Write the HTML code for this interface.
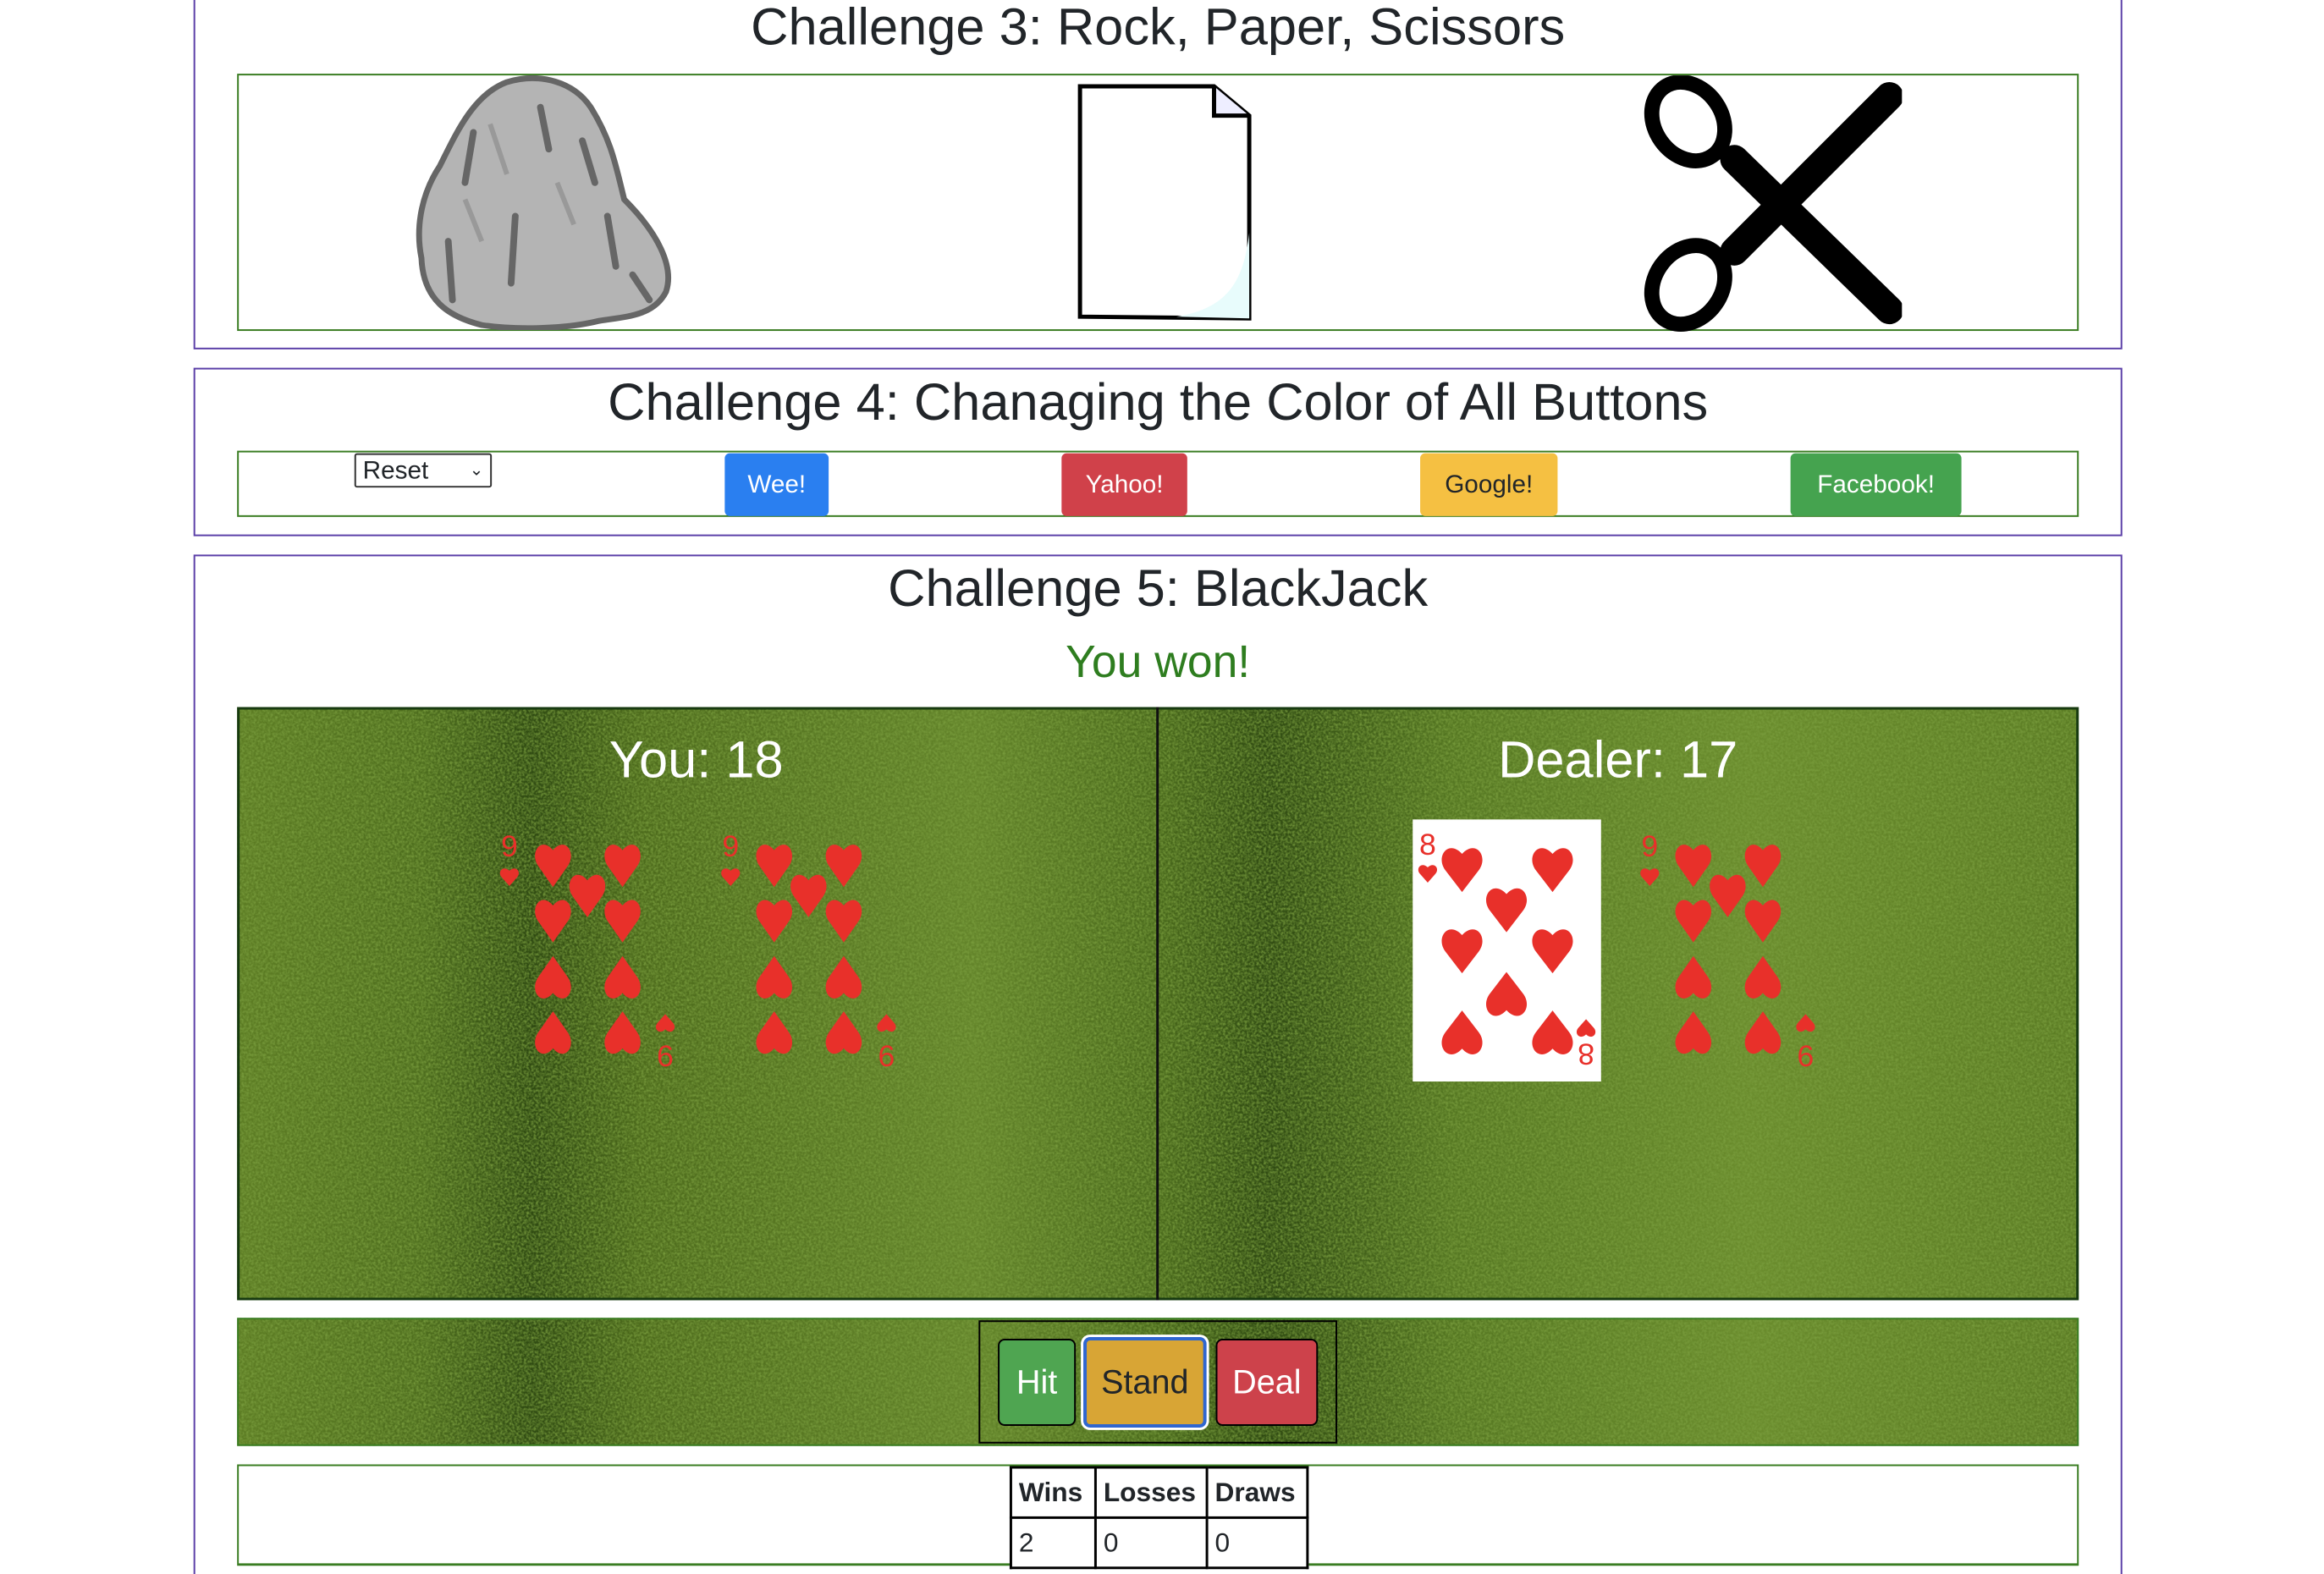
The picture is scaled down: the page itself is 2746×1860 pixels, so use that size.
<!DOCTYPE html>
<html style="height:1860px;overflow:hidden"><head><meta charset="utf-8"><style>
*{margin:0;padding:0;box-sizing:border-box}
body{width:2746px;height:1860px;background:#fff;position:relative;overflow:hidden;font-family:"Liberation Sans",sans-serif;color:#212529}
#w{position:absolute;left:0;top:0;width:2774px;height:1880px;transform:scale(0.99);transform-origin:0 0}
.a{position:absolute}
.box{position:absolute;border:2px solid #5b3fa8}
.in{position:absolute;border:2px solid #3a7d22}
.t{position:absolute;left:0;width:2764px;text-align:center;font-size:62px;line-height:1}
.btn{position:absolute;border-radius:6px;font-size:30px;display:flex;align-items:center;justify-content:center;color:#fff}
.bb{position:absolute;border:2px solid #000;border-radius:8px;font-size:40px;display:flex;align-items:center;justify-content:center;color:#fff}
td,th{border:3px solid #000;font-size:32px;text-align:left;padding:0 8px;height:60px}
</style></head><body><div id="w">
<svg width="0" height="0" style="position:absolute"><defs>
<path id="h" d="M50 98 L12 55 C-12 28 18 -8 50 22 C82 -8 112 28 88 55 Z"/>
<filter id="g" x="0" y="0" width="100%" height="100%"><feTurbulence type="fractalNoise" baseFrequency="0.35" numOctaves="2" seed="3"/><feColorMatrix values="0 0 0 0 0.2  0 0 0 0 0.35  0 0 0 0 0.05  0 0 0 -1.6 1.1"/></filter>
<linearGradient id="gg" x1="0" x2="1" y1="0" y2="0">
<stop offset="0" stop-color="#5d7d24"/><stop offset="0.1" stop-color="#4e6e1e"/><stop offset="0.16" stop-color="#2f4a12"/><stop offset="0.22" stop-color="#4d6b1c"/><stop offset="0.4" stop-color="#63842a"/><stop offset="0.5" stop-color="#4a6a1c"/><stop offset="0.56" stop-color="#2f4a12"/><stop offset="0.66" stop-color="#557722"/><stop offset="0.82" stop-color="#6a8c2d"/><stop offset="1" stop-color="#5b7c24"/></linearGradient>
</defs></svg>

<div class="box" style="left:231px;top:-10px;width:2302px;height:427px"></div>
<div class="t" style="top:2px">Challenge 3: Rock, Paper, Scissors</div>
<div class="in" style="left:283px;top:88px;width:2198px;height:307px"></div>
<svg class="a" style="left:495px;top:88px" width="310" height="306" viewBox="0 0 310 306">
<path d="M110 10 C150 -2 190 10 210 40 C235 80 240 110 250 150 C290 190 310 230 300 260 C285 290 250 290 220 295 C180 305 120 306 80 300 C40 290 10 270 8 220 C0 180 10 140 30 110 C50 70 70 25 110 10 Z" fill="#b4b4b4" stroke="#666" stroke-width="7"/>
<path d="M70 70 L60 130 M150 40 L160 90 M200 80 L215 130 M120 170 L115 250 M230 170 L240 230 M40 200 L45 270 M260 240 L280 270" stroke="#666" stroke-width="8" stroke-linecap="round"/>
<path d="M90 60 L110 120 M170 130 L190 180 M60 150 L80 200" stroke="#999" stroke-width="6"/>
</svg>
<svg class="a" style="left:1284px;top:98px" width="212" height="286" viewBox="0 0 212 286">
<path d="M5 5 L165 5 L207 40 L207 282 L5 280 Z" fill="#fff" stroke="#000" stroke-width="5"/>
<path d="M165 5 L165 40 L207 40" fill="#eef" stroke="#000" stroke-width="5"/>
<path d="M207 180 C200 240 180 270 120 280 L207 282 Z" fill="#e8fcfc"/>
</svg>
<svg class="a" style="left:1960px;top:90px" width="310" height="306" viewBox="0 0 310 306">
<path d="M110 100 L295 280" stroke="#000" stroke-width="34" stroke-linecap="round"/>
<path d="M110 210 L295 25" stroke="#000" stroke-width="34" stroke-linecap="round"/>
<ellipse cx="55" cy="55" rx="40" ry="50" transform="rotate(-35 55 55)" fill="none" stroke="#000" stroke-width="18"/>
<ellipse cx="55" cy="250" rx="40" ry="50" transform="rotate(35 55 250)" fill="none" stroke="#000" stroke-width="18"/>
</svg>

<div class="box" style="left:231px;top:439px;width:2302px;height:201px"></div>
<div class="t" style="top:450px">Challenge 4: Chanaging the Color of All Buttons</div>
<div class="in" style="left:283px;top:538px;width:2198px;height:79px"></div>
<div class="a" style="left:423px;top:541px;width:164px;height:41px;border:2px solid #333;border-radius:3px;font-size:30px;padding-left:8px;line-height:37px">Reset<span style="position:absolute;right:8px;top:0;font-size:20px">&#8964;</span></div>
<div class="btn" style="left:865px;top:541px;width:124px;height:75px;background:#2a7ff0">Wee!</div>
<div class="btn" style="left:1267px;top:541px;width:150px;height:75px;background:#d0414a">Yahoo!</div>
<div class="btn" style="left:1695px;top:541px;width:164px;height:75px;background:#f5c042;color:#212529">Google!</div>
<div class="btn" style="left:2137px;top:541px;width:204px;height:75px;background:#45a34f">Facebook!</div>

<div class="box" style="left:231px;top:662px;width:2302px;height:1240px"></div>
<div class="t" style="top:672px">Challenge 5: BlackJack</div>
<div class="t" style="top:763px;color:#2e7d1f;font-size:54px">You won!</div>
<svg class="a" style="left:283px;top:844px" width="2198" height="708"><rect width="2198" height="708" fill="url(#gg)"/><rect width="2198" height="708" filter="url(#g)"/></svg>
<div class="a" style="left:283px;top:844px;width:2198px;height:708px;border:3px solid #173a10"></div>
<div class="a" style="left:1380px;top:844px;width:3px;height:708px;background:#111"></div>
<div class="a" style="left:531px;top:872px;width:600px;text-align:center;color:#fff;font-size:62px">You: 18</div>
<div class="a" style="left:1631px;top:872px;width:600px;text-align:center;color:#fff;font-size:62px">Dealer: 17</div>

<svg class="a" style="left:585px;top:978px" width="225" height="313" viewBox="0 0 225 313">
<g id="nine" fill="#e8302a">
<text x="23" y="44" font-size="36" text-anchor="middle" font-family="Liberation Sans">9</text>
<use href="#h" transform="translate(11 56) scale(0.24)"/>
<use href="#h" transform="translate(52 24) scale(0.46 0.58)"/>
<use href="#h" transform="translate(135 24) scale(0.46 0.58)"/>
<use href="#h" transform="translate(93 60) scale(0.46 0.58)"/>
<use href="#h" transform="translate(52 90) scale(0.46 0.58)"/>
<use href="#h" transform="translate(135 90) scale(0.46 0.58)"/>
<use href="#h" transform="translate(52 220) scale(0.46 -0.58)"/>
<use href="#h" transform="translate(135 220) scale(0.46 -0.58)"/>
<use href="#h" transform="translate(52 286) scale(0.46 -0.58)"/>
<use href="#h" transform="translate(135 286) scale(0.46 -0.58)"/>
<use href="#h" transform="translate(197 256) scale(0.24 -0.24)"/>
<text x="209" y="296" font-size="36" text-anchor="middle" font-family="Liberation Sans" transform="rotate(180 209 283)">9</text>
</g></svg>
<svg class="a" style="left:849px;top:978px" width="225" height="313" viewBox="0 0 225 313"><use href="#nine"/></svg>
<svg class="a" style="left:1946px;top:978px" width="225" height="313" viewBox="0 0 225 313"><use href="#nine"/></svg>
<svg class="a" style="left:1686px;top:978px" width="225" height="313" viewBox="0 0 225 313">
<rect width="225" height="313" fill="#fff"/>
<g fill="#e8302a">
<text x="18" y="42" font-size="36" text-anchor="middle" font-family="Liberation Sans">8</text>
<use href="#h" transform="translate(6 52) scale(0.24)"/>
<use href="#h" transform="translate(33 28) scale(0.52 0.6)"/>
<use href="#h" transform="translate(141 28) scale(0.52 0.6)"/>
<use href="#h" transform="translate(86 76) scale(0.52 0.6)"/>
<use href="#h" transform="translate(33 125) scale(0.52 0.6)"/>
<use href="#h" transform="translate(141 125) scale(0.52 0.6)"/>
<use href="#h" transform="translate(86 241) scale(0.52 -0.6)"/>
<use href="#h" transform="translate(33 287) scale(0.52 -0.6)"/>
<use href="#h" transform="translate(141 287) scale(0.52 -0.6)"/>
<use href="#h" transform="translate(195 262) scale(0.24 -0.24)"/>
<text x="207" y="294" font-size="36" text-anchor="middle" font-family="Liberation Sans" transform="rotate(180 207 281)">8</text>
</g></svg>

<svg class="a" style="left:283px;top:1573px" width="2198" height="153"><rect width="2198" height="153" fill="url(#gg)"/><rect width="2198" height="153" filter="url(#g)"/></svg>
<div class="a" style="left:283px;top:1573px;width:2198px;height:153px;border:2px solid #3a7d22"></div>
<div class="a" style="left:1168px;top:1576px;width:428px;height:147px;border:2px solid #000"></div>
<div class="bb" style="left:1191px;top:1598px;width:93px;height:104px;background:#4fa551">Hit</div>
<div class="bb" style="left:1293px;top:1596px;width:147px;height:108px;background:#d8a535;color:#212529;border:4px solid #2f66d0;box-shadow:0 0 0 3px #fff">Stand</div>
<div class="bb" style="left:1451px;top:1598px;width:122px;height:104px;background:#cd424b">Deal</div>

<div class="a" style="left:283px;top:1748px;width:2198px;height:121px;border:2px solid #3a7d22;border-bottom:3px solid #3a7d22"></div>
<table class="a" style="left:1205px;top:1750px;border-collapse:collapse;background:#fff">
<tr><th style="width:101px">Wins</th><th style="width:133px">Losses</th><th style="width:120px">Draws</th></tr>
<tr><td>2</td><td>0</td><td>0</td></tr>
</table>
</div></body></html>
